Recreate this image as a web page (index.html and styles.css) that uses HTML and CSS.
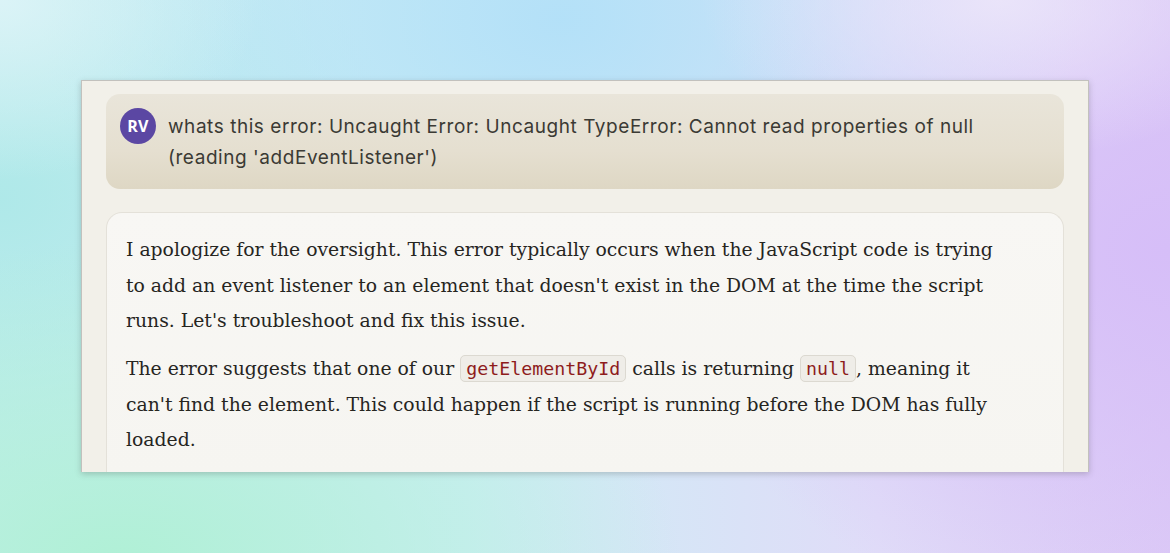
FILE: index.html
```html
<!DOCTYPE html>
<html lang="en">
<head>
<meta charset="utf-8">
<title>Chat</title>
<link rel="stylesheet" href="styles.css">
</head>
<body>
<div class="stage">
  <div class="card">
    <div class="user-msg">
      <div class="avatar">RV</div>
      <div class="user-text">whats this error: Uncaught Error: Uncaught TypeError: Cannot read properties of null (reading 'addEventListener')</div>
    </div>
    <div class="bot-msg">
      <p>I apologize for the oversight. This error typically occurs when the JavaScript code is trying to add an event listener to an element that doesn't exist in the DOM at the time the script runs. Let's troubleshoot and fix this issue.</p>
      <p>The error suggests that one of our <code>getElementById</code> calls is returning <code>null</code>, meaning it can't find the element. This could happen if the script is running before the DOM has fully loaded.</p>
    </div>
  </div>
</div>
</body>
</html>
```

FILE: styles.css
```css
html, body {
  margin: 0;
  padding: 0;
  width: 1170px;
  height: 553px;
  overflow: hidden;
}

.stage {
  width: 1170px;
  height: 553px;
  box-sizing: border-box;
  padding: 80px 81px 0 81px;
  background:
    radial-gradient(ellipse 260px 180px at 0px 0px, rgba(222,244,248,0.9), rgba(222,244,248,0) 100%),
    radial-gradient(ellipse 300px 160px at 1000px 0px, rgba(236,230,250,0.9), rgba(236,230,250,0) 100%),
    radial-gradient(ellipse 520px 360px at 560px 20px, rgba(178,224,248,0.95), rgba(178,224,248,0) 100%),
    radial-gradient(ellipse 520px 380px at 1170px 250px, rgba(214,190,248,1), rgba(214,190,248,0) 100%),
    radial-gradient(ellipse 560px 320px at 120px 560px, rgba(176,240,214,1), rgba(176,240,214,0) 100%),
    radial-gradient(ellipse 420px 320px at 0px 200px, rgba(172,232,232,0.9), rgba(172,232,232,0) 100%),
    linear-gradient(90deg, #c8eef0 0%, #cdeef5 40%, #e0dcf8 75%, #dccaf6 100%);
}

.card {
  width: 1008px;
  height: 392px;
  box-sizing: border-box;
  background: #f2f0e9;
  border: 1px solid #c2c1bd;
  border-bottom: none;
  box-shadow: 0 2px 6px rgba(60,60,60,0.25);
  padding: 13px 24px 0 24px;
  overflow: hidden;
  display: flex;
  flex-direction: column;
  gap: 23px;
}

.user-msg {
  display: flex;
  align-items: flex-start;
  gap: 12px;
  height: 95px;
  box-sizing: border-box;
  padding: 14px 14px 0 14px;
  border-radius: 14px;
  background: linear-gradient(180deg, #e9e5da 0%, #e5dfd0 60%, #ded7c4 100%);
}

.avatar {
  flex: 0 0 36px;
  width: 36px;
  height: 36px;
  border-radius: 50%;
  background: #5b47a3;
  color: #fff;
  font-family: "Open Sans", "Liberation Sans", sans-serif;
  font-weight: 700;
  font-size: 16px;
  display: flex;
  align-items: center;
  justify-content: center;
  letter-spacing: 0.3px;
}

.user-text {
  font-family: Inter, "Liberation Sans", sans-serif;
  font-size: 19px;
  line-height: 31px;
  color: #3b3a34;
  padding-top: 3px;
  width: 822px;
  letter-spacing: 0.55px;
}

.bot-msg {
  flex: 1;
  box-sizing: border-box;
  background: linear-gradient(180deg, #f8f7f4 0%, #f6f5f1 100%);
  border: 1px solid #e4e1d9;
  border-bottom: none;
  border-radius: 16px 16px 0 0;
  padding: 19px 19px 0 19px;
  font-family: "DejaVu Serif", "Liberation Serif", serif;
  font-size: 18.8px;
  line-height: 35.5px;
  color: #26251f;
}

.bot-msg p {
  margin: 0 0 12.5px 0;
  width: 875px;
}

.bot-msg code {
  font-family: "DejaVu Sans Mono", "Liberation Mono", monospace;
  font-size: 18.3px;
  line-height: 20px;
  color: #8e1c1c;
  background: #efede8;
  border: 1px solid #dcd9d1;
  border-radius: 5px;
  padding: 2px 5px;
}
```
